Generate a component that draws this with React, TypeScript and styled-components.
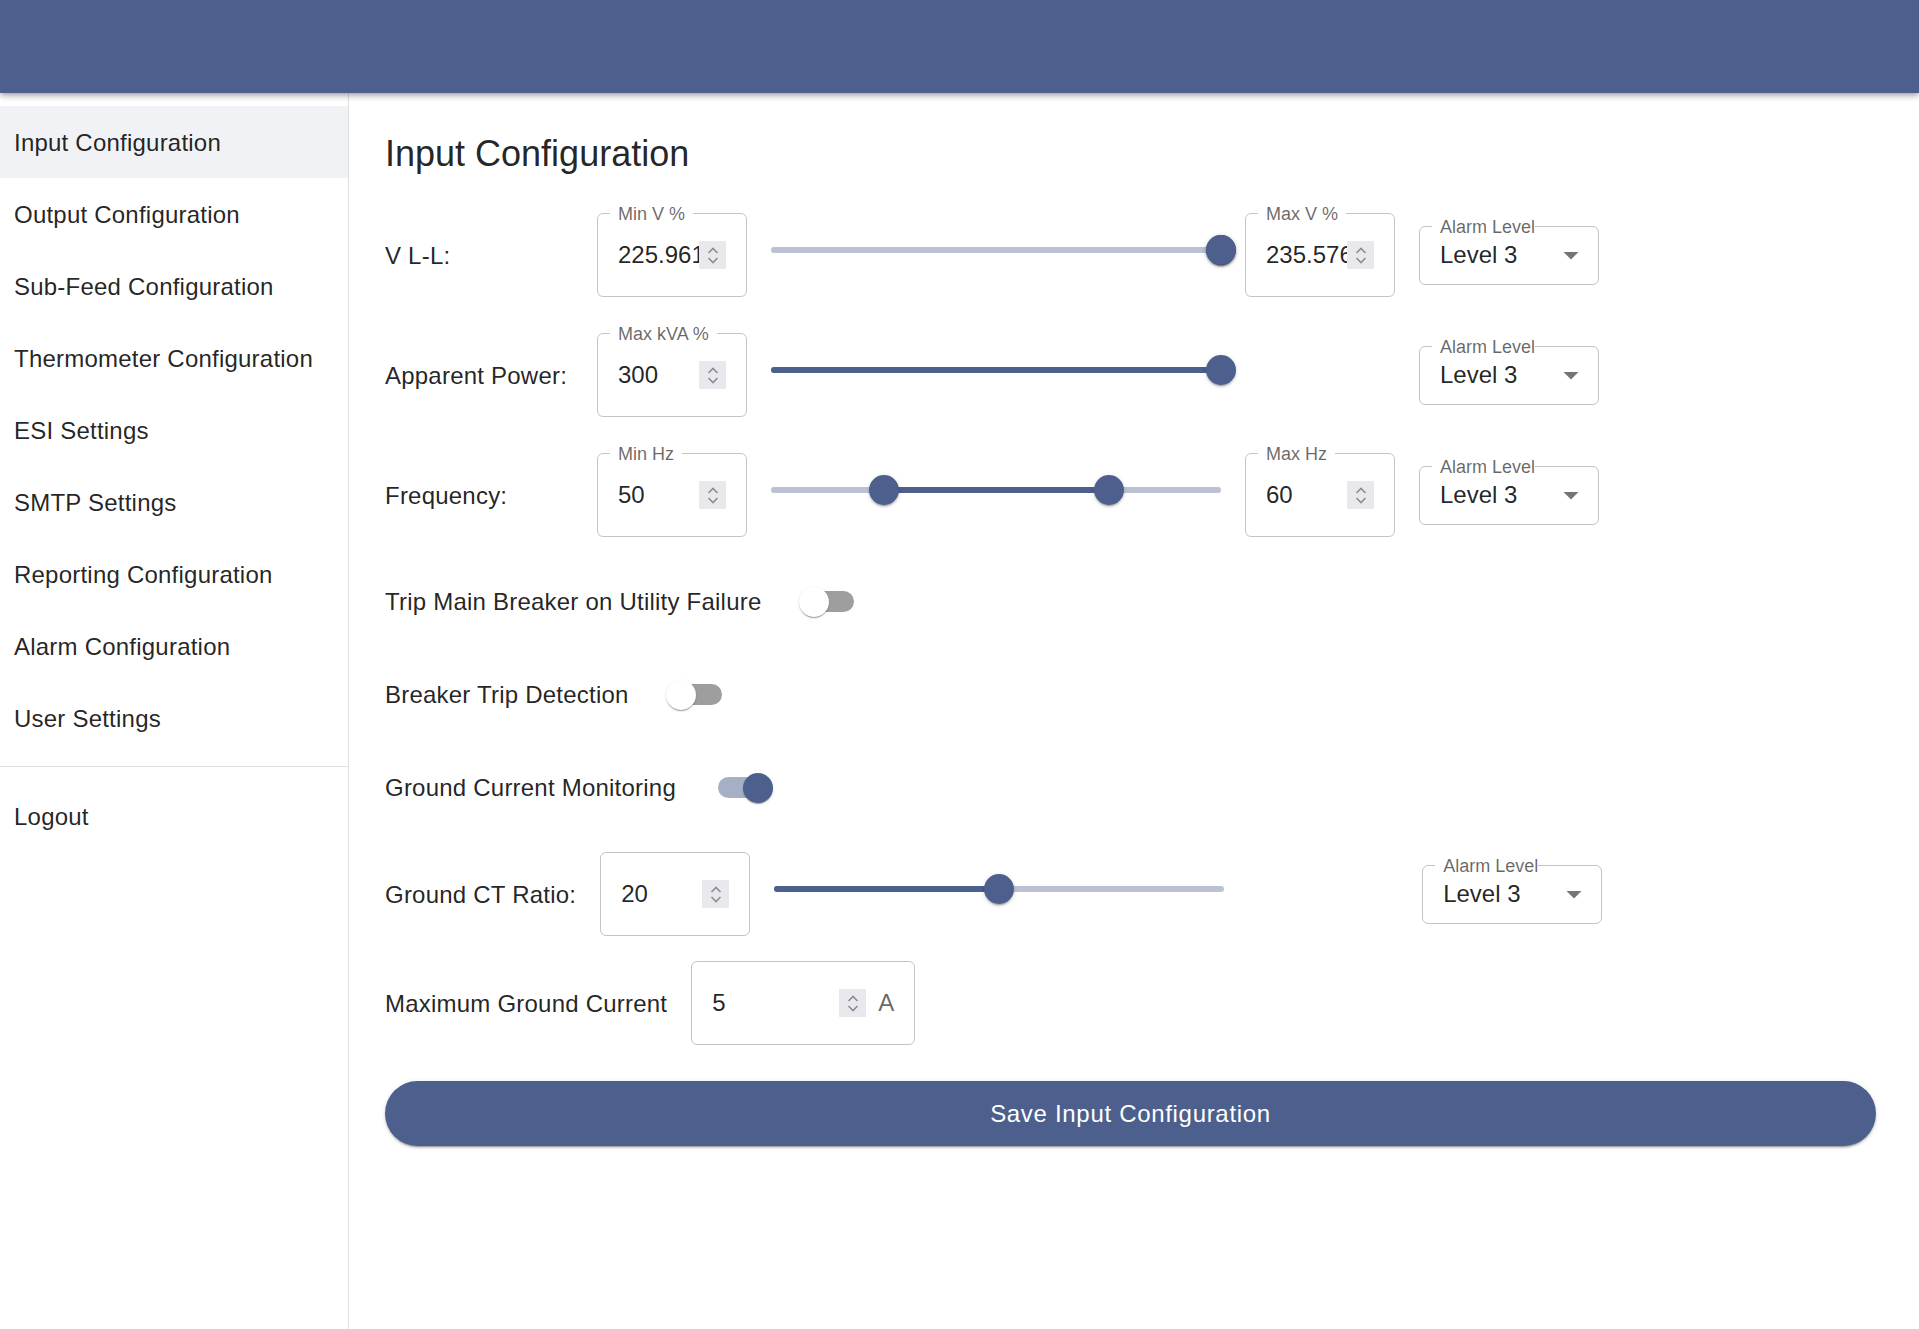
import React from 'react';
import styled, { createGlobalStyle } from 'styled-components';

const PRIMARY = '#4c5f8d';
const BORDER = 'rgba(0,0,0,0.23)';

const GlobalStyle = createGlobalStyle`
  html, body { margin: 0; padding: 0; background: #fff; }
  body {
    font-family: "Liberation Sans", Arial, sans-serif;
    color: rgba(0,0,0,0.87);
  }
  * { box-sizing: border-box; }
`;

const Page = styled.div`
  display: flex;
  flex-direction: column;
  min-height: 1329px;
`;

const Header = styled.header`
  height: 93px;
  flex-shrink: 0;
  background: ${PRIMARY};
  box-shadow: 0 2px 4px -1px rgba(0,0,0,0.2), 0 4px 5px 0 rgba(0,0,0,0.14), 0 1px 10px 0 rgba(0,0,0,0.12);
  position: relative;
  z-index: 2;
`;

const Body = styled.div`
  display: flex;
  flex: 1;
`;

const Sidebar = styled.nav`
  width: 349px;
  flex-shrink: 0;
  border-right: 1px solid #e0e0e0;
`;

const NavList = styled.ul`
  list-style: none;
  margin: 0;
  padding: 13px 0 12px;
`;

const NavItem = styled.li<{ $selected?: boolean }>`
  height: 72px;
  display: flex;
  align-items: center;
  padding: 2px 0 0 14px;
  font-size: 24px;
  line-height: 36px;
  letter-spacing: 0.22px;
  background: ${(p) => (p.$selected ? 'rgba(76,95,141,0.08)' : 'transparent')};
`;

const Divider = styled.hr`
  margin: 0;
  border: none;
  height: 1px;
  background: #e0e0e0;
`;

const Main = styled.main`
  flex: 1;
  padding: 37px 43px 36px 36px;
`;

const Title = styled.h1`
  margin: 0 0 35px;
  font-size: 36px;
  line-height: 48px;
  font-weight: 400;
`;

const Row = styled.div<{ $mb?: number }>`
  display: flex;
  align-items: center;
  gap: 24px;
  margin-bottom: ${(p) => (p.$mb ?? 36)}px;
`;

const RowLabel = styled.span<{ $width?: number }>`
  font-size: 24px;
  line-height: 36px;
  letter-spacing: 0.22px;
  white-space: nowrap;
  padding-top: 2px;
  ${(p) => (p.$width ? `width: ${p.$width}px;` : '')}
`;

const ToggleLabel = styled.span`
  font-size: 24px;
  line-height: 36px;
  letter-spacing: 0.22px;
  white-space: nowrap;
`;

const FieldBox = styled.div<{ $width?: number }>`
  position: relative;
  width: ${(p) => p.$width ?? 150}px;
  height: 84px;
  flex-shrink: 0;
  border: 1px solid ${BORDER};
  border-radius: 6px;
  display: flex;
  align-items: center;
  padding: 0 20px;
`;

const FloatLabel = styled.span<{ $tight?: boolean }>`
  position: absolute;
  top: -11px;
  left: 12px;
  padding: ${(p) => (p.$tight ? '0 0 0 8px' : '0 8px')};
  background: #fff;
  font-size: 18px;
  line-height: 22px;
  color: rgba(0,0,0,0.6);
  white-space: nowrap;
`;

const Value = styled.span`
  flex: 1;
  min-width: 0;
  overflow: hidden;
  white-space: nowrap;
  font-size: 24px;
  line-height: 30px;
`;

const Spinner = styled.span`
  width: 27px;
  height: 28px;
  flex-shrink: 0;
  background: #e9e9ed;
  display: flex;
  flex-direction: column;
  align-items: center;
  justify-content: center;
  gap: 3px;
`;

const Adornment = styled.span`
  margin-left: 12px;
  font-size: 24px;
  line-height: 30px;
  color: rgba(0,0,0,0.6);
`;

const SelectBox = styled.div`
  position: relative;
  width: 180px;
  height: 59px;
  flex-shrink: 0;
  border: 1px solid ${BORDER};
  border-radius: 6px;
  display: flex;
  align-items: center;
  justify-content: space-between;
  padding: 0 9px 0 20px;
  font-size: 24px;
`;

const SliderRoot = styled.div`
  position: relative;
  width: 450px;
  height: 30px;
  flex-shrink: 0;
  margin-top: -10px;
`;

const Track = styled.div`
  position: absolute;
  left: 0;
  right: 0;
  top: 12px;
  height: 6px;
  border-radius: 3px;
  background: #bbc2d4;
`;

const ActiveTrack = styled.div`
  position: absolute;
  top: 12px;
  height: 6px;
  border-radius: 3px;
  background: ${PRIMARY};
`;

const Thumb = styled.div`
  position: absolute;
  top: 0;
  width: 30px;
  height: 30px;
  margin-left: -15px;
  border-radius: 50%;
  background: ${PRIMARY};
  box-shadow: 0 3px 1px -2px rgba(0,0,0,0.2), 0 2px 2px 0 rgba(0,0,0,0.14), 0 1px 5px 0 rgba(0,0,0,0.12);
`;

const Spacer = styled.div<{ $width: number }>`
  width: ${(p) => p.$width}px;
  flex-shrink: 0;
`;

const SwitchRoot = styled.span`
  position: relative;
  width: 87px;
  height: 57px;
  flex-shrink: 0;
  padding: 18px;
  display: inline-flex;
`;

const SwitchTrack = styled.span<{ $on: boolean }>`
  width: 51px;
  height: 21px;
  border-radius: 10.5px;
  background: ${(p) => (p.$on ? '#a5afc6' : '#9e9e9e')};
`;

const SwitchThumb = styled.span<{ $on: boolean }>`
  position: absolute;
  top: 13.5px;
  left: ${(p) => (p.$on ? 43.5 : 13.5)}px;
  width: 30px;
  height: 30px;
  border-radius: 50%;
  background: ${(p) => (p.$on ? PRIMARY : '#fff')};
  box-shadow: 0 2px 1px -1px rgba(0,0,0,0.2), 0 1px 1px 0 rgba(0,0,0,0.14), 0 1px 3px 0 rgba(0,0,0,0.12);
`;

const SaveButton = styled.button`
  display: block;
  width: 100%;
  height: 65px;
  border: none;
  border-radius: 33px;
  background: ${PRIMARY};
  color: #fff;
  font-family: "Liberation Sans", Arial, sans-serif;
  font-size: 24px;
  letter-spacing: 0.69px;
  font-weight: 400;
  box-shadow: 0 3px 1px -2px rgba(0,0,0,0.2), 0 2px 2px 0 rgba(0,0,0,0.14), 0 1px 5px 0 rgba(0,0,0,0.12);
  cursor: pointer;
`;

const Chevron = ({ up }: { up?: boolean }) => (
  <svg width="12" height="7" viewBox="0 0 12 7">
    <path
      d={up ? 'M1.5 6 L6 1.5 L10.5 6' : 'M1.5 1 L6 5.5 L10.5 1'}
      fill="none"
      stroke="#8b8b91"
      strokeWidth="1.6"
    />
  </svg>
);

const NumberField = ({ label, value, width, unit }: { label?: string; value: string; width?: number; unit?: string }) => (
  <FieldBox $width={width}>
    {label && <FloatLabel>{label}</FloatLabel>}
    <Value>{value}</Value>
    <Spinner>
      <Chevron up />
      <Chevron />
    </Spinner>
    {unit && <Adornment>{unit}</Adornment>}
  </FieldBox>
);

const AlarmSelect = () => (
  <SelectBox>
    <FloatLabel $tight>Alarm Level</FloatLabel>
    <span>Level 3</span>
    <svg width="36" height="36" viewBox="0 0 24 24">
      <path d="M7 10l5 5 5-5z" fill="rgba(0,0,0,0.54)" />
    </svg>
  </SelectBox>
);

const Slider = ({ values }: { values: number[] }) => {
  const lo = values.length > 1 ? Math.min(...values) : 0;
  const hi = Math.max(...values);
  return (
    <SliderRoot>
      <Track />
      <ActiveTrack style={{ left: `${lo}%`, width: `${hi - lo}%` }} />
      {values.map((v, i) => (
        <Thumb key={i} style={{ left: `${v}%` }} />
      ))}
    </SliderRoot>
  );
};

const Switch = ({ on }: { on: boolean }) => (
  <SwitchRoot>
    <SwitchTrack $on={on} />
    <SwitchThumb $on={on} />
  </SwitchRoot>
);

const navItems = [
  'Input Configuration',
  'Output Configuration',
  'Sub-Feed Configuration',
  'Thermometer Configuration',
  'ESI Settings',
  'SMTP Settings',
  'Reporting Configuration',
  'Alarm Configuration',
  'User Settings',
];

export default function App() {
  return (
    <>
      <GlobalStyle />
      <Page>
        <Header />
        <Body>
          <Sidebar>
            <NavList>
              {navItems.map((n, i) => (
                <NavItem key={n} $selected={i === 0}>
                  {n}
                </NavItem>
              ))}
            </NavList>
            <Divider />
            <NavList>
              <NavItem>Logout</NavItem>
            </NavList>
          </Sidebar>
          <Main>
            <Title>Input Configuration</Title>

            <Row>
              <RowLabel $width={188}>V L-L:</RowLabel>
              <NumberField label="Min V %" value="225.9612" />
              <Slider values={[100, 100]} />
              <NumberField label="Max V %" value="235.5768" />
              <AlarmSelect />
            </Row>

            <Row>
              <RowLabel $width={188}>Apparent Power:</RowLabel>
              <NumberField label="Max kVA %" value="300" />
              <Slider values={[100]} />
              <Spacer $width={150} />
              <AlarmSelect />
            </Row>

            <Row>
              <RowLabel $width={188}>Frequency:</RowLabel>
              <NumberField label="Min Hz" value="50" />
              <Slider values={[25, 75]} />
              <NumberField label="Max Hz" value="60" />
              <AlarmSelect />
            </Row>

            <Row>
              <ToggleLabel>Trip Main Breaker on Utility Failure</ToggleLabel>
              <Switch on={false} />
            </Row>

            <Row>
              <ToggleLabel>Breaker Trip Detection</ToggleLabel>
              <Switch on={false} />
            </Row>

            <Row>
              <ToggleLabel>Ground Current Monitoring</ToggleLabel>
              <Switch on={true} />
            </Row>

            <Row $mb={25}>
              <RowLabel>Ground CT Ratio:</RowLabel>
              <NumberField value="20" />
              <Slider values={[50]} />
              <Spacer $width={150} />
              <AlarmSelect />
            </Row>

            <Row>
              <RowLabel>Maximum Ground Current</RowLabel>
              <NumberField value="5" width={224} unit="A" />
            </Row>

            <SaveButton>Save Input Configuration</SaveButton>
          </Main>
        </Body>
      </Page>
    </>
  );
}
